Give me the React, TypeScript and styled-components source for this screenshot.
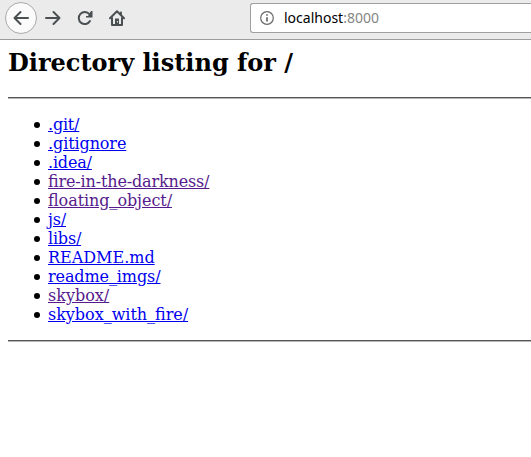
import React from "react";
import styled, { createGlobalStyle } from "styled-components";

const GlobalStyle = createGlobalStyle`
  html, body { margin: 0; background: #fff; overflow: hidden; }
`;
const Window = styled.div`
  width: 100%;
  height: 457px;
  overflow: hidden;
  background: #fff;
`;
const Toolbar = styled.header`
  box-sizing: border-box;
  height: 40px;
  display: flex;
  align-items: flex-start;
  background: #ebebeb;
  border-bottom: 1px solid #9c9c9c;
`;
const NavButtons = styled.nav`
  box-sizing: border-box;
  display: flex;
  width: 250px;
  flex: none;
  padding-left: 5px;
`;
const NavButton = styled.button<{ $round?: boolean }>`
  box-sizing: border-box;
  width: 32px;
  height: 32px;
  margin-top: 2px;
  padding: 0;
  display: grid;
  place-items: center;
  border: 1px solid ${(p) => (p.$round ? "#aaa" : "transparent")};
  border-radius: 50%;
  background: ${(p) => (p.$round ? "#fbfbfb" : "transparent")};
`;
const Icon = styled.svg`
  display: block;
  fill: none;
  stroke: #4a4f51;
  stroke-width: 2;
  stroke-linecap: round;
  stroke-linejoin: round;
`;
const AddressBar = styled.div`
  box-sizing: border-box;
  flex: 1;
  height: 30px;
  margin-top: 3px;
  display: flex;
  align-items: center;
  padding-left: 9px;
  gap: 10px;
  background: #fff;
  border: 1px solid #a0a0a0;
  border-right: 0;
  border-radius: 3px 0 0 3px;
`;
const Address = styled.span`
  font: 14px/20px "Noto Sans", sans-serif;
  color: #000;
`;
const Port = styled.span`
  color: #858585;
`;
const Listing = styled.main`
  margin-left: 8px;
  font: 16px/19px "DejaVu Serif", serif;
  color: #000;
`;
const Title = styled.h1`
  margin: 0;
  padding-top: 9px;
  height: 48px;
  font-size: 24px;
  line-height: 28px;
  font-weight: bold;
  white-space: nowrap;
`;
const Rule = styled.hr`
  height: 1px;
  margin: 0;
  border: 0;
  border-top: 1px solid #565656;
  background: #b6b6b6;
`;
const Files = styled.ul`
  margin: 16px 0;
  padding: 0 0 0 26px;
  list-style: none;
`;
const FileItem = styled.li`
  display: flex;
  align-items: center;
  gap: 8px;
  height: 19px;
  &::before {
    content: "";
    width: 6px;
    height: 6px;
    border-radius: 50%;
    background: #000;
  }
`;
const FileLink = styled.a<{ $visited?: boolean; $tracking?: number }>`
  color: ${(p) => (p.$visited ? "#551a8b" : "#0000ee")};
  letter-spacing: ${(p) => p.$tracking ?? 0}px;
  font-feature-settings: "liga" 1;
  text-decoration: underline;
  white-space: nowrap;
`;

const files = [
  { name: ".git/", tracking: -0.2 },
  { name: ".gitignore", tracking: -0.1 },
  { name: ".idea/", tracking: -0.17 },
  { name: "fire-in-the-darkness/", visited: true, tracking: -0.15 },
  { name: "floating_object/", visited: true, tracking: -0.07 },
  { name: "js/", tracking: -0.2 },
  { name: "libs/", tracking: -0.2 },
  { name: "README.md" },
  { name: "readme_imgs/", tracking: -0.1 },
  { name: "skybox/", visited: true },
  { name: "skybox_with_fire/", tracking: -0.03 },
];

export default function App() {
  return (
    <Window>
      <GlobalStyle />
      <Toolbar>
        <NavButtons>
          <NavButton $round aria-label="Back">
            <Icon width="16" height="16" viewBox="0 0 16 16"><path d="M15 8H1.5M7.5 2L1.5 8L7.5 14" /></Icon>
          </NavButton>
          <NavButton aria-label="Forward">
            <Icon width="16" height="16" viewBox="0 0 16 16"><path d="M1 8H14.5M8.5 2L14.5 8L8.5 14" /></Icon>
          </NavButton>
          <NavButton aria-label="Reload">
            <Icon width="16" height="16" viewBox="0 0 16 16">
              <path d="M13 11A6 6 0 1 1 12.4 4.2" />
              <path d="M15.5 1V7.5H9V6H11L14 1Z" fill="#4a4f51" stroke="none" />
            </Icon>
          </NavButton>
          <NavButton aria-label="Home">
            <Icon width="16" height="16" viewBox="0 0 16 16">
              <path d="M1 8.3L8 1.3L15 8.3M3 8V15H13V8" />
              <path d="M6 15V8.5H10V15Z" fill="#4a4f51" stroke="none" />
              <path d="M12 2.5V4" />
              <path d="M8.5 11V12.5" stroke="#ebebeb" strokeWidth="1" strokeLinecap="butt" />
            </Icon>
          </NavButton>
        </NavButtons>
        <AddressBar>
          <Icon width="14" height="14" viewBox="0 0 14 14">
            <circle cx="7" cy="7" r="6.3" stroke="#686868" strokeWidth="1.2" />
            <path d="M7 6.2V10.5M7 3.3V4.8" stroke="#686868" strokeWidth="1.7" strokeLinecap="butt" />
          </Icon>
          <Address>localhost<Port>:8000</Port></Address>
        </AddressBar>
      </Toolbar>
      <Listing>
        <Title>Directory listing for /</Title>
        <Rule />
        <Files>
          {files.map((f) => (
            <FileItem key={f.name}>
              <FileLink href="#" $visited={f.visited} $tracking={f.tracking}>{f.name}</FileLink>
            </FileItem>
          ))}
        </Files>
        <Rule />
      </Listing>
    </Window>
  );
}
